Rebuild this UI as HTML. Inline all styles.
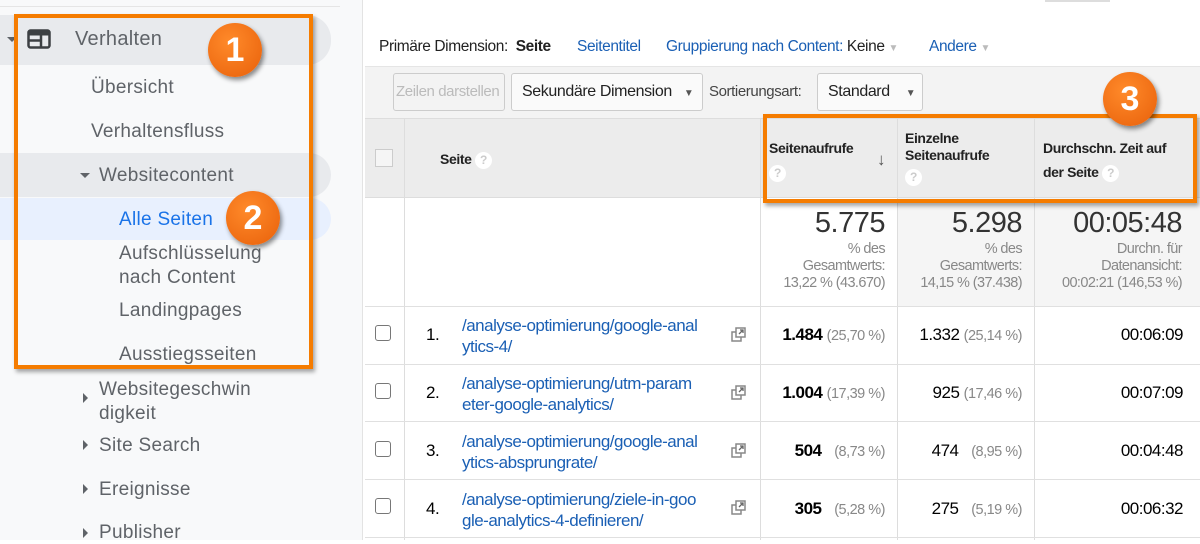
<!DOCTYPE html>
<html><head><meta charset="utf-8"><style>
*{margin:0;padding:0;box-sizing:border-box}
body{width:1200px;height:540px;overflow:hidden;position:relative;background:#fff;font-family:"Liberation Sans",sans-serif}
.a{position:absolute;white-space:nowrap}
.side{position:absolute;left:0;top:0;width:363px;height:540px;background:#f8f9fa;border-right:1px solid #e3e3e3}
.nav{color:#5f6368;font-size:19px;letter-spacing:0.3px}
.band{position:absolute;left:0;border-radius:0 24px 24px 0}
.tri-d{position:absolute;width:0;height:0;border-left:5px solid transparent;border-right:5px solid transparent;border-top:5px solid #5f6368}
.tri-r{position:absolute;width:0;height:0;border-top:5px solid transparent;border-bottom:5px solid transparent;border-left:5px solid #5f6368}
.circ{position:absolute;width:54px;height:54px;border-radius:50%;background:radial-gradient(circle at 40% 35%,#ff8a2a,#e8600a);color:#fff;font-size:34px;text-align:center;line-height:54px;box-shadow:2px 3px 5px rgba(0,0,0,.45);font-weight:bold}
.ob{position:absolute;border:4px solid #f57c00;box-shadow:2px 3px 4px rgba(0,0,0,.35)}
.t{font-size:15px;color:#222;letter-spacing:-0.4px}
.lnk{color:#1a5fb4}
.vl{position:absolute;width:1px;background:#ddd}
.hl{position:absolute;height:1px;background:#e0e0e0;left:365px;width:835px}
.cb{position:absolute;width:16px;height:16px;border:1.5px solid #777;border-radius:3px;background:#fff}
.btn{position:absolute;height:38px;border:1px solid #ccc;border-radius:3px;background:#fafafa;font-size:15px;letter-spacing:-0.4px;color:#222;line-height:36px;padding-left:10px}
.q{display:inline-block;width:17px;height:17px;border-radius:50%;background:#fff;color:#ccc;font-size:12px;text-align:center;line-height:17px;vertical-align:middle}
.row{font-size:17px;letter-spacing:-0.5px}
.gr{color:#888;font-size:14.5px}
</style></head><body>
<div class="side"></div>
<div class="a" style="left:0;top:6px;width:340px;height:1px;background:#e5e5e5"></div>
<div class="band" style="top:15px;height:50px;width:331px;background:#e8eaed"></div>
<div class="band" style="top:153px;height:44px;width:331px;background:#e8eaed"></div>
<div class="band" style="top:198px;height:42px;width:331px;background:#e8f0fe"></div>
<div class="tri-d" style="left:7px;top:37px"></div>
<svg class="a" style="left:27px;top:29px" width="24" height="20" viewBox="0 0 24 20"><rect x="1.5" y="1.5" width="21" height="17" rx="2" fill="none" stroke="#3c4043" stroke-width="2.5"/><rect x="1.5" y="1.5" width="21" height="5" fill="#3c4043"/><line x1="14" y1="6" x2="14" y2="18" stroke="#3c4043" stroke-width="2.5"/><line x1="2" y1="11.5" x2="14" y2="11.5" stroke="#3c4043" stroke-width="2.5"/></svg>
<div class="a nav" style="left:75px;top:28px;font-size:20px">Verhalten</div>
<div class="a nav" style="left:91px;top:77px">Übersicht</div>
<div class="a nav" style="left:91px;top:121px">Verhaltensfluss</div>
<div class="tri-d" style="left:80px;top:173px"></div>
<div class="a nav" style="left:99px;top:165px">Websitecontent</div>
<div class="a nav" style="left:119px;top:209px;color:#1a73e8">Alle Seiten</div>
<div class="a nav" style="left:119px;top:242px;line-height:24px">Aufschlüsselung<br>nach Content</div>
<div class="a nav" style="left:119px;top:300px">Landingpages</div>
<div class="a nav" style="left:119px;top:344px">Ausstiegsseiten</div>
<div class="tri-r" style="left:83px;top:393px"></div>
<div class="a nav" style="left:99px;top:378px;line-height:24px">Websitegeschwin<br>digkeit</div>
<div class="tri-r" style="left:83px;top:440px"></div>
<div class="a nav" style="left:99px;top:435px">Site Search</div>
<div class="tri-r" style="left:83px;top:484px"></div>
<div class="a nav" style="left:99px;top:479px">Ereignisse</div>
<div class="tri-r" style="left:83px;top:528px"></div>
<div class="a nav" style="left:99px;top:522px">Publisher</div>
<div class="ob" style="left:14px;top:14px;width:299px;height:355px"></div>
<div class="circ" style="left:208px;top:23px">1</div>
<div class="circ" style="left:226px;top:191px">2</div>

<div class="a" style="left:1045px;top:0;width:65px;height:2px;background:#ddd"></div>
<div class="a t" style="left:379px;top:38px;font-size:15.5px">Primäre Dimension: &nbsp;<b>Seite</b></div>
<div class="a t lnk" style="left:577px;top:38px;font-size:15.5px">Seitentitel</div>
<div class="a t" style="left:666px;top:38px;font-size:15.5px"><span class="lnk">Gruppierung nach Content:</span> Keine <span style="color:#bbb;font-size:10px">▼</span></div>
<div class="a t lnk" style="left:929px;top:38px;font-size:15.5px">Andere <span style="color:#bbb;font-size:10px">▼</span></div>
<div class="a" style="left:365px;top:66px;width:835px;height:52px;background:#f3f3f3;border-top:1px solid #e5e5e5"></div>
<div class="btn" style="left:393px;top:73px;width:112px;color:#bbb;padding-left:2px;background:#f3f3f3">Zeilen darstellen</div>
<div class="btn" style="left:511px;top:73px;width:192px;font-size:16px">Sekundäre Dimension <span style="color:#555;font-size:10px;margin-left:8px">▼</span></div>
<div class="a t" style="left:709px;top:83px;color:#444">Sortierungsart:</div>
<div class="btn" style="left:817px;top:73px;width:106px;font-size:16px">Standard <span style="color:#555;font-size:10px;margin-left:12px">▼</span></div>

<div class="a" style="left:365px;top:118px;width:835px;height:80px;background:#ececec;border-top:1px solid #ddd;border-bottom:1px solid #ddd"></div>
<div class="a" style="left:375px;top:149px;width:18px;height:18px;border:1px solid #ccc;background:#f5f5f5"></div>
<div class="a t" style="left:440px;top:151px;font-weight:bold;font-size:14px">Seite <span class="q">?</span></div>
<div class="a t" style="left:769px;top:136px;font-weight:bold;font-size:14px;line-height:24px">Seitenaufrufe<br><span class="q">?</span></div>
<div class="a" style="left:877px;top:150px;color:#555;font-size:17px">↓</div>
<div class="a t" style="left:905px;top:130px;font-weight:bold;font-size:14px;line-height:17px">Einzelne<br>Seitenaufrufe<br><span class="q" style="margin-top:5px">?</span></div>
<div class="a t" style="left:1043px;top:136px;font-weight:bold;font-size:14px;line-height:24px">Durchschn. Zeit auf<br>der Seite <span class="q">?</span></div>

<div class="a" style="left:897px;top:198px;width:303px;height:108px;background:#f5f5f5"></div>
<div class="vl" style="left:404px;top:118px;height:422px"></div>
<div class="vl" style="left:760px;top:118px;height:422px"></div>
<div class="vl" style="left:897px;top:118px;height:422px"></div>
<div class="vl" style="left:1034px;top:118px;height:422px"></div>
<div class="a" style="left:760px;top:207px;width:125px;text-align:right;font-size:29px;color:#333;letter-spacing:-0.5px">5.775</div>
<div class="a" style="left:897px;top:207px;width:125px;text-align:right;font-size:29px;color:#333;letter-spacing:-0.5px">5.298</div>
<div class="a" style="left:1034px;top:207px;width:148px;text-align:right;font-size:29px;color:#333;letter-spacing:-0.5px">00:05:48</div>
<div class="a gr" style="left:760px;top:241px;width:125px;text-align:right;line-height:17px;letter-spacing:-0.6px">% des<br>Gesamtwerts:<br>13,22 % (43.670)</div>
<div class="a gr" style="left:897px;top:241px;width:125px;text-align:right;line-height:17px;letter-spacing:-0.6px">% des<br>Gesamtwerts:<br>14,15 % (37.438)</div>
<div class="a gr" style="left:1034px;top:241px;width:148px;text-align:right;line-height:17px;letter-spacing:-0.6px">Durchn. für<br>Datenansicht:<br>00:02:21 (146,53 %)</div>

<div class="hl" style="top:306px"></div>
<div class="hl" style="top:364px"></div>
<div class="hl" style="top:421px"></div>
<div class="hl" style="top:479px"></div>
<div class="hl" style="top:537px"></div>

<div class="cb" style="left:375px;top:325px"></div>
<div class="a row" style="left:426px;top:325px">1.</div>
<div class="a row lnk" style="left:462px;top:315px;line-height:21px">/analyse-optimierung/google-anal<br>ytics-4/</div>
<div class="a row" style="left:760px;top:325px;width:125px;text-align:right"><b>1.484</b> <span class="gr">(25,70 %)</span></div>
<div class="a row" style="left:897px;top:325px;width:125px;text-align:right">1.332 <span class="gr">(25,14 %)</span></div>
<div class="a row" style="left:1034px;top:325px;width:149px;text-align:right">00:06:09</div>

<div class="cb" style="left:375px;top:383px"></div>
<div class="a row" style="left:426px;top:383px">2.</div>
<div class="a row lnk" style="left:462px;top:373px;line-height:21px">/analyse-optimierung/utm-param<br>eter-google-analytics/</div>
<div class="a row" style="left:760px;top:383px;width:125px;text-align:right"><b>1.004</b> <span class="gr">(17,39 %)</span></div>
<div class="a row" style="left:897px;top:383px;width:125px;text-align:right">925 <span class="gr">(17,46 %)</span></div>
<div class="a row" style="left:1034px;top:383px;width:149px;text-align:right">00:07:09</div>

<div class="cb" style="left:375px;top:441px"></div>
<div class="a row" style="left:426px;top:441px">3.</div>
<div class="a row lnk" style="left:462px;top:431px;line-height:21px">/analyse-optimierung/google-anal<br>ytics-absprungrate/</div>
<div class="a row" style="left:760px;top:441px;width:125px;text-align:right"><b>504</b> &nbsp;&nbsp;<span class="gr">(8,73 %)</span></div>
<div class="a row" style="left:897px;top:441px;width:125px;text-align:right">474 &nbsp;&nbsp;<span class="gr">(8,95 %)</span></div>
<div class="a row" style="left:1034px;top:441px;width:149px;text-align:right">00:04:48</div>

<div class="cb" style="left:375px;top:498px"></div>
<div class="a row" style="left:426px;top:499px">4.</div>
<div class="a row lnk" style="left:462px;top:489px;line-height:21px">/analyse-optimierung/ziele-in-goo<br>gle-analytics-4-definieren/</div>
<div class="a row" style="left:760px;top:499px;width:125px;text-align:right"><b>305</b> &nbsp;&nbsp;<span class="gr">(5,28 %)</span></div>
<div class="a row" style="left:897px;top:499px;width:125px;text-align:right">275 &nbsp;&nbsp;<span class="gr">(5,19 %)</span></div>
<div class="a row" style="left:1034px;top:499px;width:149px;text-align:right">00:06:32</div>

<svg class="a" style="left:731px;top:327px" width="16" height="16" viewBox="0 0 16 16"><rect x="1" y="5" width="9" height="9" fill="#fff" stroke="#888" stroke-width="1.5"/><rect x="5" y="1" width="9" height="9" fill="#fff" stroke="#888" stroke-width="1.5"/><path d="M8 7 L12 3 M9 3 H12 V6" stroke="#666" stroke-width="1.3" fill="none"/></svg>
<svg class="a" style="left:731px;top:385px" width="16" height="16" viewBox="0 0 16 16"><rect x="1" y="5" width="9" height="9" fill="#fff" stroke="#888" stroke-width="1.5"/><rect x="5" y="1" width="9" height="9" fill="#fff" stroke="#888" stroke-width="1.5"/><path d="M8 7 L12 3 M9 3 H12 V6" stroke="#666" stroke-width="1.3" fill="none"/></svg>
<svg class="a" style="left:731px;top:443px" width="16" height="16" viewBox="0 0 16 16"><rect x="1" y="5" width="9" height="9" fill="#fff" stroke="#888" stroke-width="1.5"/><rect x="5" y="1" width="9" height="9" fill="#fff" stroke="#888" stroke-width="1.5"/><path d="M8 7 L12 3 M9 3 H12 V6" stroke="#666" stroke-width="1.3" fill="none"/></svg>
<svg class="a" style="left:731px;top:500px" width="16" height="16" viewBox="0 0 16 16"><rect x="1" y="5" width="9" height="9" fill="#fff" stroke="#888" stroke-width="1.5"/><rect x="5" y="1" width="9" height="9" fill="#fff" stroke="#888" stroke-width="1.5"/><path d="M8 7 L12 3 M9 3 H12 V6" stroke="#666" stroke-width="1.3" fill="none"/></svg>

<div class="ob" style="left:763px;top:114px;width:434px;height:89px"></div>
<div class="circ" style="left:1103px;top:72px">3</div>
</body></html>
